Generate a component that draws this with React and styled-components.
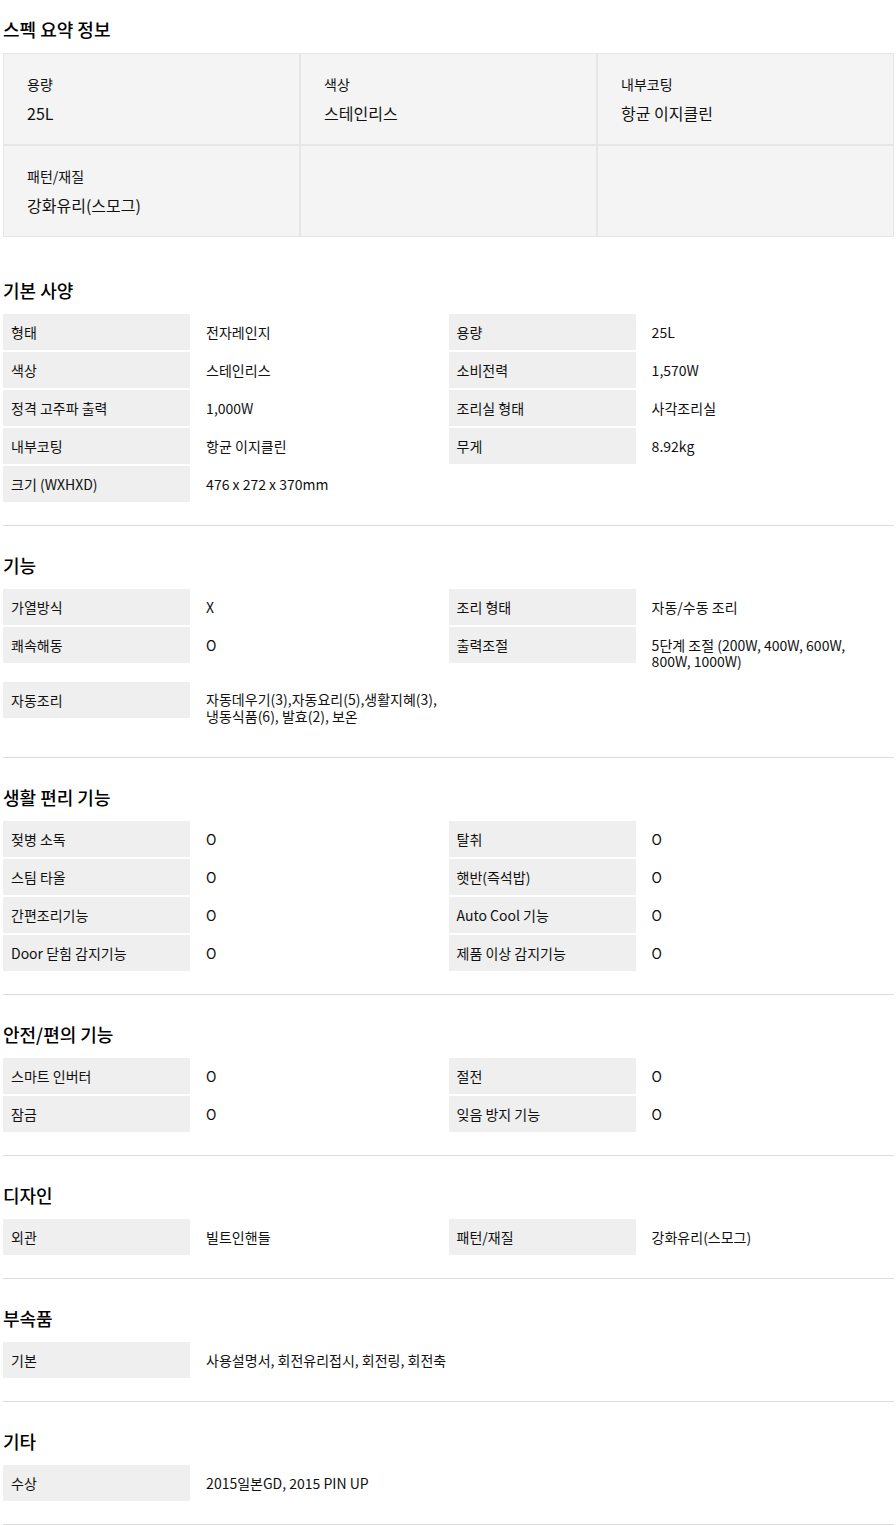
import React from 'react';
import styled, { createGlobalStyle } from 'styled-components';

const GlobalStyle = createGlobalStyle`
  html, body { margin: 0; padding: 0; background: #fff; }
  body {
    font-family: "Noto Sans CJK KR", "Noto Sans", sans-serif;
    color: #111;
    font-feature-settings: "palt" 1;
  }
  * { box-sizing: border-box; }
`;

const Page = styled.div`
  width: 891px;
  margin-left: 3px;
`;

const SummarySection = styled.section`
  padding: 17px 0 14px;
`;

const Heading = styled.h2`
  margin: 0;
  font-size: 18px;
  line-height: 24px;
  font-weight: 500;
  color: #000;
`;

const SummaryGrid = styled.div`
  margin-top: 12px;
  display: grid;
  grid-template-columns: repeat(3, 1fr);
  background: #f4f4f4;
`;

const SummaryCell = styled.div`
  border: 1px solid #e6e6e6;
  height: 92px;
  padding: 20px 23px 0;
`;

const SummaryLabel = styled.div`
  font-size: 14px;
  line-height: 20px;
`;

const SummaryValue = styled.div`
  margin-top: 8px;
  font-size: 16px;
  line-height: 22px;
`;

const SpecSection = styled.section`
  padding: 27px 0 23px;
  border-bottom: 1px solid #ddd;
`;

const SpecGrid = styled.div`
  margin-top: 12px;
  display: grid;
  grid-template-columns: 1fr 1fr;
  row-gap: 2px;
`;

const SpecItem = styled.div`
  display: flex;
  align-items: flex-start;
`;

const SpecLabel = styled.div`
  flex: 0 0 42%;
  background: #efefef;
  padding: 10px 8px;
  font-size: 14px;
  line-height: 16px;
  color: #111;
`;

const SpecValue = styled.div`
  flex: 1;
  padding: 9.75px 0 9.75px 16px;
  font-size: 14px;
  line-height: 16.5px;
  white-space: pre-line;
  word-break: keep-all;
  color: #111;
`;

const summary = [
  ['용량', '25L'],
  ['색상', '스테인리스'],
  ['내부코팅', '항균 이지클린'],
  ['패턴/재질', '강화유리(스모그)'],
  null,
  null,
];

const sections = [
  {
    title: '기본 사양',
    items: [
      ['형태', '전자레인지'], ['용량', '25L'],
      ['색상', '스테인리스'], ['소비전력', '1,570W'],
      ['정격 고주파 출력', '1,000W'], ['조리실 형태', '사각조리실'],
      ['내부코팅', '항균 이지클린'], ['무게', '8.92kg'],
      ['크기 (WXHXD)', '476 x 272 x 370mm'],
    ],
  },
  {
    title: '기능',
    items: [
      ['가열방식', 'X'], ['조리 형태', '자동/수동 조리'],
      ['쾌속해동', 'O'], ['출력조절', '5단계 조절 (200W, 400W, 600W,\n800W, 1000W)'],
      ['자동조리', '자동데우기(3),자동요리(5),생활지혜(3),\n냉동식품(6), 발효(2), 보온'],
    ],
  },
  {
    title: '생활 편리 기능',
    items: [
      ['젖병 소독', 'O'], ['탈취', 'O'],
      ['스팀 타올', 'O'], ['햇반(즉석밥)', 'O'],
      ['간편조리기능', 'O'], ['Auto Cool 기능', 'O'],
      ['Door 닫힘 감지기능', 'O'], ['제품 이상 감지기능', 'O'],
    ],
  },
  {
    title: '안전/편의 기능',
    items: [
      ['스마트 인버터', 'O'], ['절전', 'O'],
      ['잠금', 'O'], ['잊음 방지 기능', 'O'],
    ],
  },
  {
    title: '디자인',
    items: [
      ['외관', '빌트인핸들'], ['패턴/재질', '강화유리(스모그)'],
    ],
  },
  {
    title: '부속품',
    items: [['기본', '사용설명서, 회전유리접시, 회전링, 회전축']],
  },
  {
    title: '기타',
    items: [['수상', '2015일본GD, 2015 PIN UP']],
  },
];

export default function App() {
  return (
    <Page>
      <GlobalStyle />
      <SummarySection>
        <Heading>스펙 요약 정보</Heading>
        <SummaryGrid>
          {summary.map((s, i) => (
            <SummaryCell key={i}>
              {s && (
                <>
                  <SummaryLabel>{s[0]}</SummaryLabel>
                  <SummaryValue>{s[1]}</SummaryValue>
                </>
              )}
            </SummaryCell>
          ))}
        </SummaryGrid>
      </SummarySection>
      {sections.map((sec) => (
        <SpecSection key={sec.title}>
          <Heading>{sec.title}</Heading>
          <SpecGrid>
            {sec.items.map(([k, v], i) => (
              <SpecItem key={i}>
                <SpecLabel>{k}</SpecLabel>
                <SpecValue>{v}</SpecValue>
              </SpecItem>
            ))}
          </SpecGrid>
        </SpecSection>
      ))}
    </Page>
  );
}
